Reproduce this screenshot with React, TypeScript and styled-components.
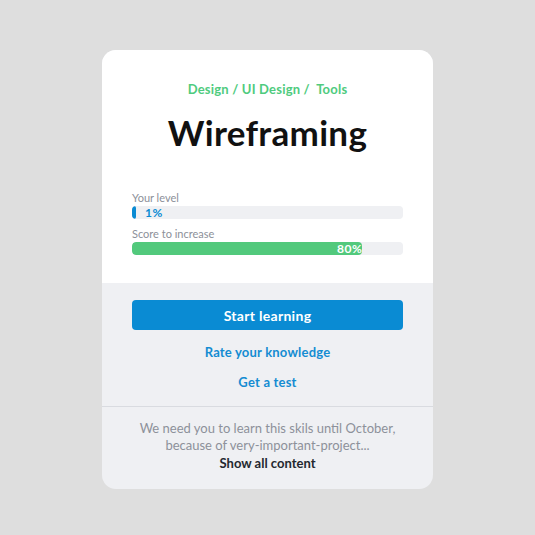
import styled, { createGlobalStyle } from 'styled-components';

const GlobalStyle = createGlobalStyle`
  html, body {
    margin: 0;
    padding: 0;
    background: #dedede;
    font-family: Lato, "Open Sans", sans-serif;
  }
`;

const Page = styled.div`
  width: 535px;
  height: 535px;
  display: flex;
  justify-content: center;
  padding-top: 50px;
  box-sizing: border-box;
`;

const Card = styled.div`
  width: 331px;
  height: 439px;
  border-radius: 14px;
  overflow: hidden;
  background: #eff0f3;
  display: flex;
  flex-direction: column;
`;

const Top = styled.div`
  background: #ffffff;
  height: 233px;
  padding: 31px 30px 0;
  box-sizing: border-box;
  display: flex;
  flex-direction: column;
`;

const Crumbs = styled.div`
  text-align: center;
  color: #4fcb7e;
  font-size: 13px;
  font-weight: 700;
  letter-spacing: 0.2px;
`;

const Title = styled.h1`
  margin: 14px 0 0;
  text-align: center;
  font-size: 35px;
  font-weight: 700;
  color: #111;
  letter-spacing: 0.3px;
`;

const Metric = styled.div`
  margin-top: ${(p: { $top: number }) => p.$top}px;
`;

const Label = styled.div`
  font-size: 11px;
  color: #8c9099;
  line-height: 13px;
  margin-bottom: 2px;
`;

const Track = styled.div`
  position: relative;
  height: 13px;
  border-radius: 4px;
  background: #eff0f3;
  overflow: hidden;
`;

const Fill = styled.div<{ $color: string }>`
  height: 100%;
  background: ${(p) => p.$color};
  border-radius: 4px;
  display: flex;
  justify-content: flex-end;
  align-items: center;
`;

const Pct = styled.span<{ $color: string }>`
  font-size: 12px;
  font-weight: 700;
  color: ${(p) => p.$color};
  line-height: 13px;
  letter-spacing: 0.5px;
`;

const OverPct = styled(Pct)`
  position: absolute;
  left: 13px;
  top: 0;
`;

const Actions = styled.div`
  padding: 17px 30px 0;
  height: 124px;
  box-sizing: border-box;
  display: flex;
  flex-direction: column;
  align-items: center;
  border-bottom: 1px solid #d9dbe0;
`;

const Primary = styled.button`
  width: 100%;
  height: 30px;
  border: none;
  border-radius: 4px;
  background: #0a8bd3;
  color: #fff;
  font-family: inherit;
  font-size: 14px;
  font-weight: 700;
  letter-spacing: 0.3px;
`;

const LinkBtn = styled.a`
  color: #148cd2;
  font-size: 13px;
  font-weight: 700;
  letter-spacing: 0.2px;
  margin-top: ${(p: { $top: number }) => p.$top}px;
  line-height: 16px;
`;

const Note = styled.div`
  padding-top: 13px;
  text-align: center;
  font-size: 13px;
  line-height: 17px;
  color: #8d919a;
`;

const ShowAll = styled.div`
  color: #23282f;
  font-weight: 700;
  line-height: 19px;
`;

export default function App() {
  return (
    <>
      <GlobalStyle />
      <Page>
        <Card>
          <Top>
            <Crumbs>Design / UI Design /&nbsp; Tools</Crumbs>
            <Title>Wireframing</Title>
            <Metric $top={38}>
              <Label>Your level</Label>
              <Track>
                <Fill $color="#0a8bd3" style={{ width: '1.5%' }} />
                <OverPct $color="#0a8bd3">1%</OverPct>
              </Track>
            </Metric>
            <Metric $top={8}>
              <Label>Score to increase</Label>
              <Track>
                <Fill $color="#52c97c" style={{ width: '85%' }}>
                  <Pct $color="#ffffff">80%</Pct>
                </Fill>
              </Track>
            </Metric>
          </Top>
          <Actions>
            <Primary>Start learning</Primary>
            <LinkBtn $top={14}>Rate your knowledge</LinkBtn>
            <LinkBtn $top={14}>Get a test</LinkBtn>
          </Actions>
          <Note>
            We need you to learn this skils until October,
            <br />
            because of very-important-project...
            <ShowAll>Show all content</ShowAll>
          </Note>
        </Card>
      </Page>
    </>
  );
}
